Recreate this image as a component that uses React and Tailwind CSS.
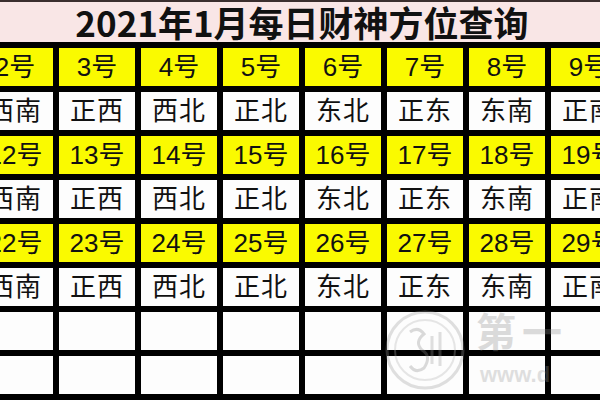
const dirs = ['西南', '正西', '西北', '正北', '东北', '正东', '东南', '正南']

const rows = [
  { kind: 'num', cells: [2, 3, 4, 5, 6, 7, 8, 9].map((n) => `${n}号`) },
  { kind: 'dir', cells: dirs },
  { kind: 'num', cells: [12, 13, 14, 15, 16, 17, 18, 19].map((n) => `${n}号`) },
  { kind: 'dir', cells: dirs },
  { kind: 'num', cells: [22, 23, 24, 25, 26, 27, 28, 29].map((n) => `${n}号`) },
  { kind: 'dir', cells: dirs },
  { kind: 'empty', cells: Array(8).fill('') },
  { kind: 'empty', cells: Array(8).fill('') },
]

// faint site watermark, bottom right
function Watermark() {
  return (
    <div className="absolute left-[384px] top-[302px] w-[216px] h-[98px] pointer-events-none opacity-30">
      <svg width="216" height="98" viewBox="0 0 216 98" fill="none">
        <circle cx="41" cy="48" r="38" stroke="#9a9a9a" strokeWidth="3" />
        <circle cx="41" cy="48" r="30" stroke="#b0b0b0" strokeWidth="2" />
        <path d="M26 30 q8 -6 14 2 q-10 8 -2 16 q10 6 2 18 q-8 6 -14 -2" stroke="#8a8a8a" strokeWidth="3" />
        <path d="M48 34 v28 M56 30 v34" stroke="#9a9a9a" strokeWidth="3" />
      </svg>
      <div
        className="absolute left-[92px] top-[8px] text-[40px] leading-none font-bold text-[#8c8c8c] tracking-[6px]"
        style={{ fontFamily: '"Noto Sans CJK SC", sans-serif' }}
      >
        第一
      </div>
      <div
        className="absolute left-[96px] top-[62px] text-[22px] leading-none font-bold text-[#9a9a9a]"
        style={{ fontFamily: '"Liberation Sans", sans-serif' }}
      >
        www.d
      </div>
    </div>
  )
}

export default function App() {
  return (
    <div className="relative w-[600px] h-[400px] overflow-hidden bg-black">
      <div className="h-[42px] bg-[#f9e6e6] border-t-2 border-[#3b2e2e] flex items-center justify-center">
        <span
          className="text-[35px] leading-[40px] font-bold text-[#111] pl-[4px]"
          style={{ fontFamily: '"Noto Sans CJK SC", "Liberation Serif", serif' }}
        >
          2021年1月每日财神方位查询
        </span>
      </div>
      <div className="ml-[-23px] mt-[6px] grid grid-cols-[repeat(8,76px)] auto-rows-[38px] gap-[6px]">
        {rows.map((row, ri) =>
          row.cells.map((c, ci) => (
            <div
              key={`${ri}-${ci}`}
              className={
                'flex items-center justify-center text-[26px] leading-none text-[#111] ' +
                (row.kind === 'num' ? 'bg-[#fafa00]' : 'bg-[#fdfdfd]')
              }
              style={{ fontFamily: '"Liberation Sans", "Noto Sans CJK SC", sans-serif' }}
            >
              {row.kind === 'dir' ? <span className="tracking-[1px]">{c}</span> : c}
            </div>
          ))
        )}
      </div>
      <Watermark />
    </div>
  )
}
